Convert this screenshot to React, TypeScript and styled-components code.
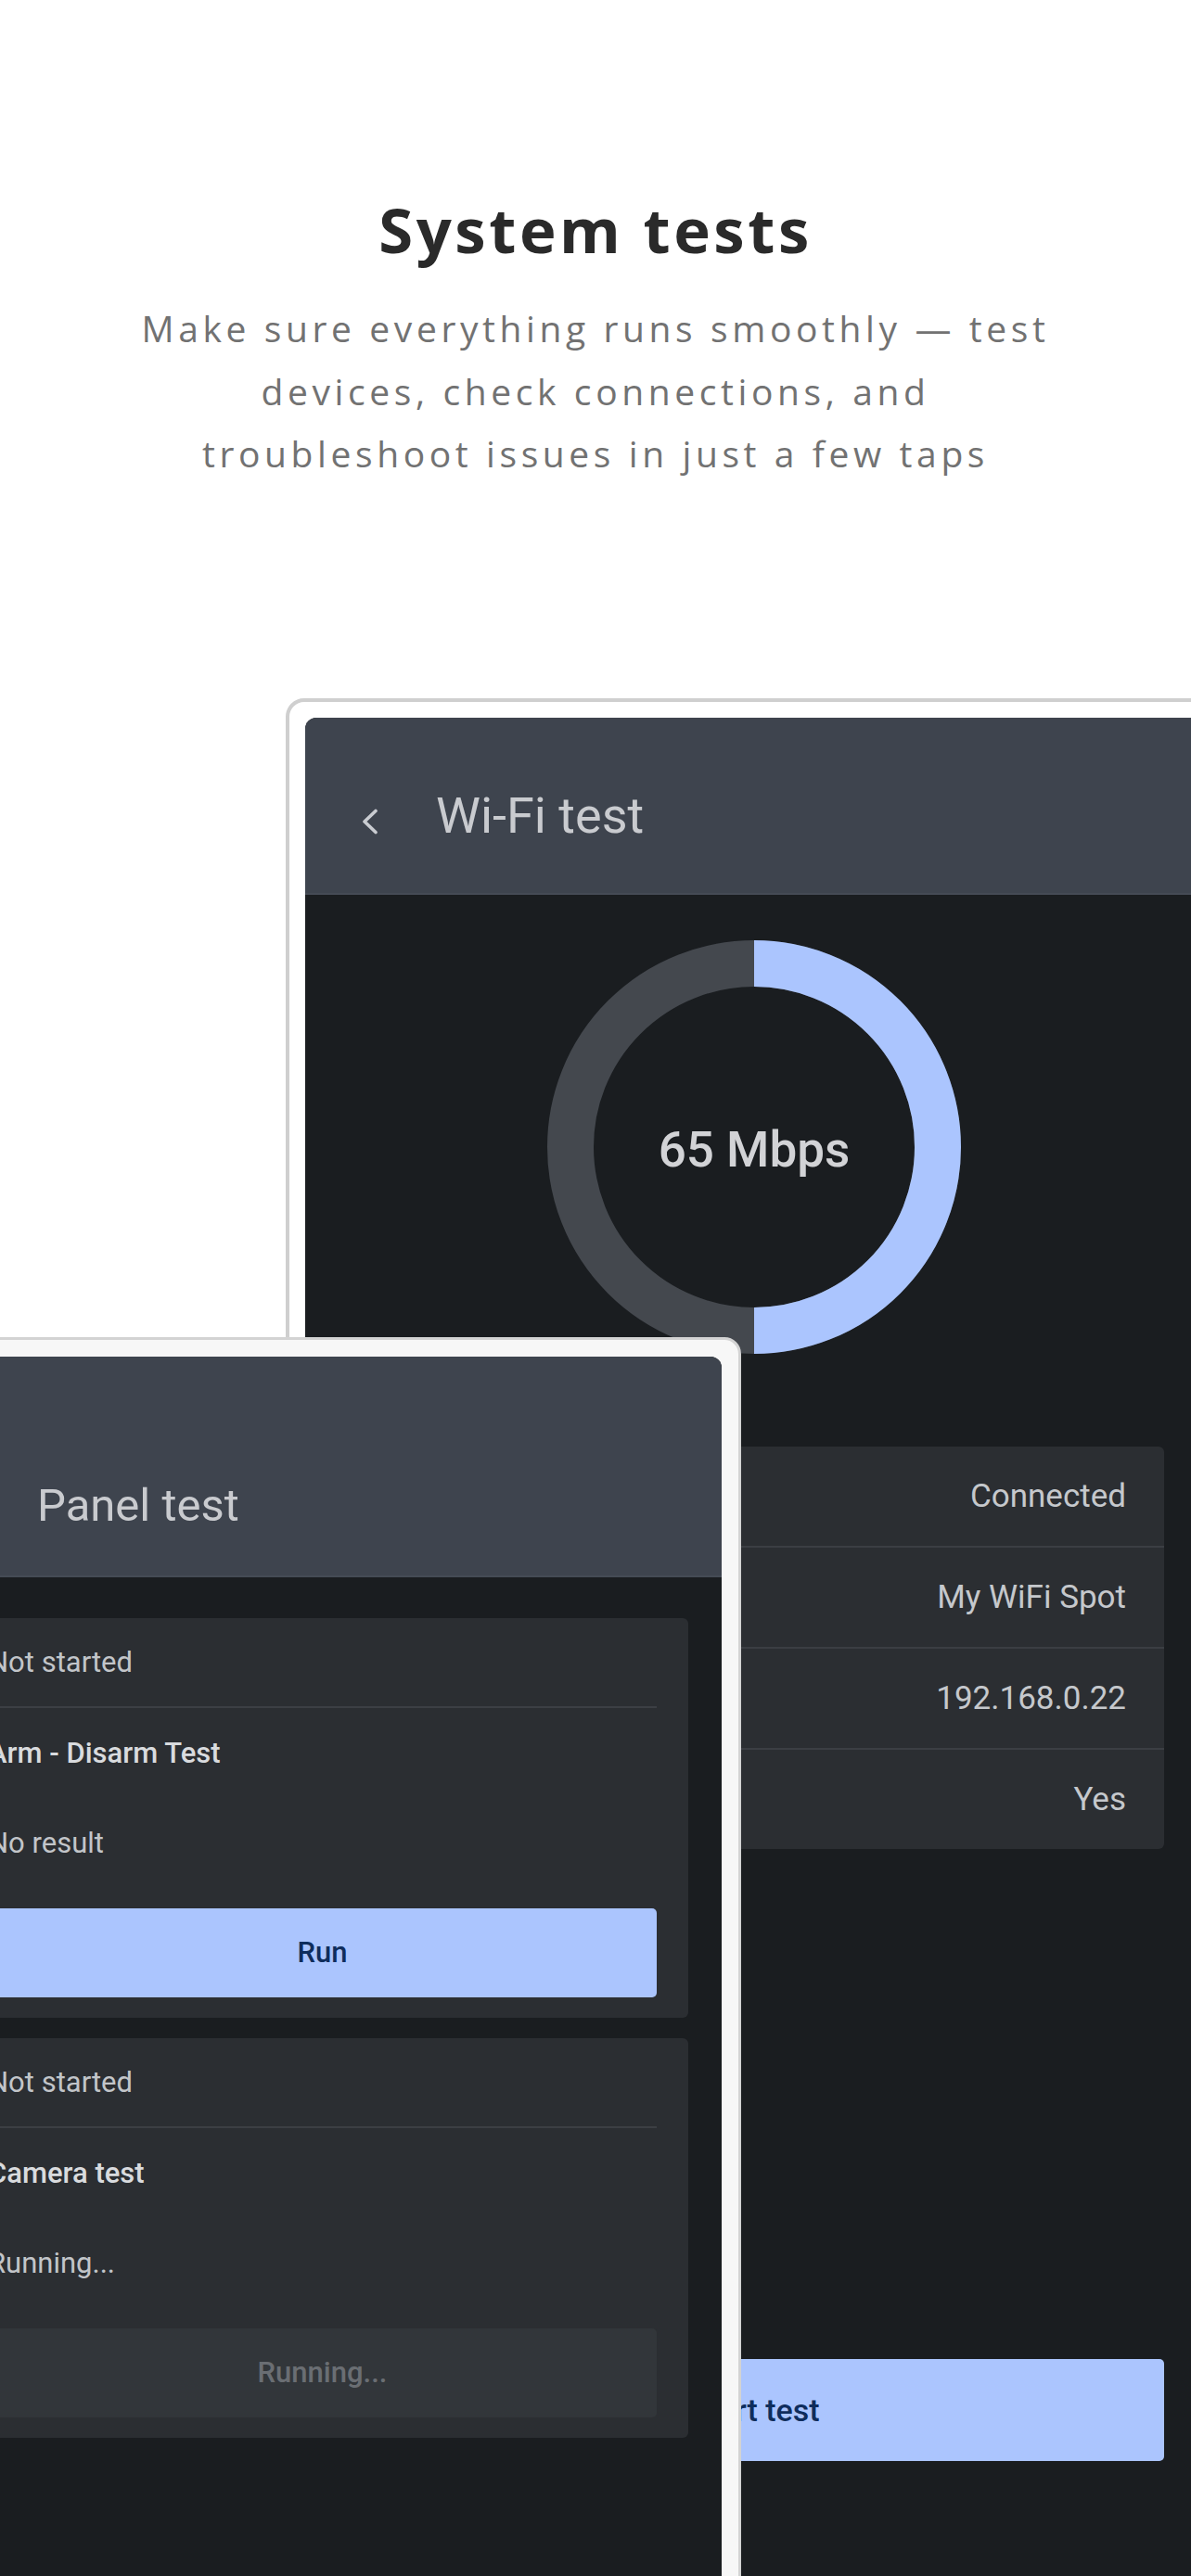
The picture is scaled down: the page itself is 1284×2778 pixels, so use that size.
import React from "react";
import styled, { createGlobalStyle } from "styled-components";

const GlobalStyle = createGlobalStyle`
  html, body {
    margin: 0;
    padding: 0;
    background: #ffffff;
  }
  body {
    font-family: Roboto, "Noto Sans", sans-serif;
  }
  *, *::before, *::after {
    box-sizing: border-box;
  }
`;

const Page = styled.main`
  position: relative;
  width: 1284px;
  height: 2778px;
  overflow: hidden;
  background: #ffffff;
`;

const Intro = styled.header`
  padding-top: 207px;
  text-align: center;
`;

const Title = styled.h1`
  margin: 0;
  font-family: "Open Sans", "Noto Sans", sans-serif;
  font-weight: 700;
  font-size: 67px;
  line-height: 80px;
  letter-spacing: 3.6px;
  color: #2a2a2a;
`;

const Subtitle = styled.p`
  margin: 33px 0 0;
  font-family: "Open Sans", "Noto Sans", sans-serif;
  font-weight: 400;
  font-size: 39px;
  line-height: 67.5px;
  letter-spacing: 4.6px;
  color: #727272;
`;

const Stage = styled.section`
  position: relative;
  margin-top: 230px;
  padding-left: 308px;
`;

const Frame = styled.div<{ $width: number; $border: number; $pad: number; $bezel: string; $edge: string }>`
  width: ${(p) => p.$width}px;
  padding: ${(p) => p.$pad}px;
  border: ${(p) => p.$border}px solid ${(p) => p.$edge};
  border-radius: 20px;
  background: ${(p) => p.$bezel};
`;

const FloatingFrame = styled(Frame)`
  position: absolute;
  left: -104px;
  top: 689px;
  border-radius: 18px;
`;

const Screen = styled.div<{ $minHeight: number }>`
  min-height: ${(p) => p.$minHeight}px;
  border-radius: 12px;
  overflow: hidden;
  background: #1a1d20;
  display: flex;
  flex-direction: column;
`;

const AppBar = styled.div`
  display: flex;
  background: #3e444e;
  border-bottom: 2px solid #454b55;
  color: #c9cbcf;
  font-family: Roboto, sans-serif;
  font-weight: 400;
`;

const WifiBar = styled(AppBar)`
  height: 191px;
  align-items: center;
  padding: 23px 0 0 61px;
  gap: 62px;
`;

const PanelBar = styled(AppBar)`
  height: 238px;
  align-items: flex-end;
  padding: 0 0 47px 123px;
`;

const BarTitle = styled.span<{ $size: number }>`
  font-size: ${(p) => p.$size}px;
  line-height: normal;
  white-space: nowrap;
`;

const BackIcon = styled.svg`
  display: block;
  flex: none;
  margin-top: 13px;
`;

const WifiBody = styled.div`
  display: flex;
  flex-direction: column;
  align-items: center;
  padding: 49px 42px 240px;
`;

const Gauge = styled.div`
  display: grid;
  place-items: center;
  width: 446px;
  height: 446px;
  & > * {
    grid-area: 1 / 1;
  }
`;

const GaugeValue = styled.span`
  padding-top: 6px;
  font-family: Roboto, sans-serif;
  font-weight: 500;
  font-size: 53px;
  color: #d2d3d6;
`;

const InfoCard = styled.div`
  width: 100%;
  margin-top: 100px;
  background: #2b2e32;
  border-radius: 6px;
`;

const InfoRow = styled.div`
  height: 107px;
  display: flex;
  align-items: center;
  justify-content: space-between;
  padding: 0 41px 0 40px;
  font-family: Roboto, sans-serif;
  font-size: 35px;
  color: #c5c8cc;
  & + & {
    height: 109px;
    border-top: 2px solid #3b3e43;
  }
`;

const InfoLabel = styled.span`
  color: #9ea2a8;
`;

const PrimaryButton = styled.button<{ $height: number; $size: number }>`
  display: flex;
  align-items: center;
  justify-content: center;
  width: 100%;
  height: ${(p) => p.$height}px;
  border: none;
  border-radius: 5px;
  background: #abc5fe;
  color: #0f2d5c;
  font-family: Roboto, sans-serif;
  font-weight: 500;
  font-size: ${(p) => p.$size}px;
  padding: 0;
`;

const StartButton = styled(PrimaryButton)`
  margin-top: 550px;
`;

const DisabledButton = styled(PrimaryButton)`
  background: #32363a;
  color: #6a6e73;
`;

const PanelBody = styled.div`
  display: flex;
  flex-direction: column;
  gap: 22px;
  padding: 44px 36px;
`;

const TestCard = styled.div`
  display: flex;
  flex-direction: column;
  padding: 0 34px 22px;
  background: #2b2e32;
  border-radius: 6px;
  font-family: Roboto, sans-serif;
  font-size: 31px;
`;

const TestRow = styled.div<{ $height: number; $strong?: boolean }>`
  height: ${(p) => p.$height}px;
  display: flex;
  align-items: center;
  white-space: nowrap;
  font-weight: ${(p) => (p.$strong ? 500 : 400)};
  color: ${(p) => (p.$strong ? "#d9dbde" : "#c2c5c9")};
`;

const Divider = styled.hr`
  margin: 0;
  border: none;
  height: 2px;
  background: #3c3f44;
`;

const ActionSlot = styled.div`
  margin-top: 22px;
`;

function BackChevron() {
  return (
    <BackIcon width="18" height="28" viewBox="0 0 18 28" aria-hidden="true">
      <polyline
        points="15,2.5 3,14 15,25.5"
        fill="none"
        stroke="#c9ccd1"
        strokeWidth="3.6"
        strokeLinecap="round"
        strokeLinejoin="round"
      />
    </BackIcon>
  );
}

function SpeedGauge({ value, fraction }: { value: string; fraction: number }) {
  const r = 198;
  const c = 223;
  const angle = fraction * 2 * Math.PI;
  const x = c + r * Math.sin(angle);
  const y = c - r * Math.cos(angle);
  const large = fraction > 0.5 ? 1 : 0;
  return (
    <Gauge>
      <svg width="446" height="446" viewBox="0 0 446 446" aria-hidden="true">
        <circle cx={c} cy={c} r={r} fill="none" stroke="#44484e" strokeWidth="50" />
        <path
          d={`M ${c} ${c - r} A ${r} ${r} 0 ${large} 1 ${x.toFixed(2)} ${y.toFixed(2)}`}
          fill="none"
          stroke="#abc5fe"
          strokeWidth="50"
        />
      </svg>
      <GaugeValue>{value}</GaugeValue>
    </Gauge>
  );
}

const wifiInfo = [
  { label: "Status", value: "Connected" },
  { label: "Network", value: "My WiFi Spot" },
  { label: "IP address", value: "192.168.0.22" },
  { label: "Internet", value: "Yes" },
];

type Test = {
  status: string;
  name: string;
  result: string;
  running: boolean;
};

const tests: Test[] = [
  { status: "Not started", name: "Arm - Disarm Test", result: "No result", running: false },
  { status: "Not started", name: "Camera test", result: "Running...", running: true },
];

function TestItem({ test }: { test: Test }) {
  return (
    <TestCard>
      <TestRow $height={95}>{test.status}</TestRow>
      <Divider />
      <TestRow $height={97} $strong>
        {test.name}
      </TestRow>
      <TestRow $height={97}>{test.result}</TestRow>
      <ActionSlot>
        {test.running ? (
          <DisabledButton $height={96} $size={31}>
            Running...
          </DisabledButton>
        ) : (
          <PrimaryButton $height={96} $size={31}>
            Run
          </PrimaryButton>
        )}
      </ActionSlot>
    </TestCard>
  );
}

export default function App() {
  return (
    <>
      <GlobalStyle />
      <Page>
        <Intro>
          <Title>System tests</Title>
          <Subtitle>
            Make sure everything runs smoothly — test
            <br />
            devices, check connections, and
            <br />
            troubleshoot issues in just a few taps
          </Subtitle>
        </Intro>
        <Stage>
          <Frame $width={1010} $border={4} $pad={17} $bezel="#ffffff" $edge="#cfcfcf">
            <Screen $minHeight={2100}>
              <WifiBar>
                <BackChevron />
                <BarTitle $size={54}>Wi-Fi test</BarTitle>
              </WifiBar>
              <WifiBody>
                <SpeedGauge value="65 Mbps" fraction={0.5} />
                <InfoCard>
                  {wifiInfo.map((row) => (
                    <InfoRow key={row.label}>
                      <InfoLabel>{row.label}</InfoLabel>
                      <span>{row.value}</span>
                    </InfoRow>
                  ))}
                </InfoCard>
                <StartButton $height={110} $size={34}>
                  Start test
                </StartButton>
              </WifiBody>
            </Screen>
          </Frame>
          <FloatingFrame $width={903} $border={3} $pad={18} $bezel="#f7f7f7" $edge="#d3d3d3">
            <Screen $minHeight={1400}>
              <PanelBar>
                <BarTitle $size={49}>Panel test</BarTitle>
              </PanelBar>
              <PanelBody>
                {tests.map((t) => (
                  <TestItem key={t.name} test={t} />
                ))}
              </PanelBody>
            </Screen>
          </FloatingFrame>
        </Stage>
      </Page>
    </>
  );
}
